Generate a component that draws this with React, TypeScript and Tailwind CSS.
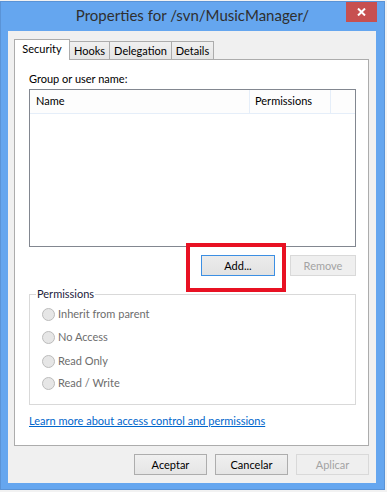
import React from "react";

const btn =
  "h-[21px] border border-[#adadad] bg-gradient-to-b from-[#f0f0f0] to-[#e5e5e5] text-[11px] leading-[19px] text-black flex items-center justify-center";
const btnDisabled =
  "h-[21px] border border-[#d9d9d9] bg-[#efefef] text-[11px] leading-[19px] text-[#a3a3a3] flex items-center justify-center";

const tabs = [
  { label: "Security", w: "w-[56px]", active: true },
  { label: "Hooks", w: "w-[41px]", active: false },
  { label: "Delegation", w: "w-[63px]", active: false },
  { label: "Details", w: "w-[43px]", active: false },
];

const perms = [
  { label: "Inherit from parent", mt: "mt-0" },
  { label: "No Access", mt: "mt-[7px]" },
  { label: "Read Only", mt: "mt-[8px]" },
  { label: "Read / Write", mt: "mt-[6px]" },
];

function Radio({ label, mt }: { label: string; mt: string }) {
  return (
    <div className={`flex items-center h-[16px] gap-[3px] ${mt}`}>
      <span className="w-[13px] h-[13px] rounded-full border border-[#bcbcbc] bg-[#e6e6e6]" />
      <span className="text-[11px] leading-[16px] text-[#6d6d6d]">{label}</span>
    </div>
  );
}

export default function App() {
  return (
    <div className="w-[387px] h-[492px] bg-[#f2f2f2] pt-[1px] overflow-hidden font-['Lato',sans-serif]">
      <div className="w-[385px] h-[489px] border border-[#5a93d6] bg-[#65a6ef] flex flex-col">
        {/* Title bar */}
        <div className="relative h-[29px] flex items-center justify-center">
          <span className="text-[15px] leading-[20px] text-[#2f2f2f] -mt-[3px]">
            Properties for /svn/MusicManager/
          </span>
          <button className="absolute right-[7px] top-0 w-[31px] h-[20px] bg-[#c75050] flex items-center justify-center">
            <svg width="9" height="8" viewBox="0 0 9 8">
              <path d="M1 0.5 L8 7.5 M8 0.5 L1 7.5" stroke="#fff" strokeWidth="2" />
            </svg>
          </button>
        </div>

        {/* Client area */}
        <div className="ml-[7px] mr-[8px] mb-[6px] flex-1 bg-[#f0f0f0] pt-[8px] pl-[6px] pr-[7px] flex flex-col">
          {/* Tabs */}
          <div className="flex items-end h-[20px]">
            {tabs.map((t, i) =>
              t.active ? (
                <div
                  key={t.label}
                  className={`${t.w} h-[21px] -mb-px relative z-10 border border-b-0 border-[#acacac] bg-white text-[11px] leading-[18px] text-black flex justify-center`}
                >
                  {t.label}
                </div>
              ) : (
                <div
                  key={t.label}
                  className={`${t.w} h-[18px] ${i > 0 ? "-ml-px" : ""} border border-b-0 border-[#acacac] bg-gradient-to-b from-[#f0f0f0] to-[#e5e5e5] text-[11px] leading-[17px] text-black flex justify-center`}
                >
                  {t.label}
                </div>
              )
            )}
          </div>

          {/* Tab panel */}
          <div className="w-[355px] h-[387px] border border-[#acacac] bg-white pt-[11px] pl-[14px] pr-[12px] flex flex-col">
            <div className="text-[11px] leading-[16px] text-black">Group or user name:</div>

            <div className="mt-[2px] h-[158px] border border-[#828790] bg-white">
              <div className="h-[24px] flex border-b border-[#e5eef9] bg-[#fdfdfd] text-[11px] text-black">
                <div className="w-[220px] pl-[6px] flex items-center border-r border-[#e5eef9]">Name</div>
                <div className="w-[81px] pl-[5px] flex items-center border-r border-[#e5eef9]">Permissions</div>
              </div>
            </div>

            <div className="relative mt-[8px] flex justify-end gap-[15px]">
              <button className="w-[74px] h-[21px] border border-[#3c8fe3] bg-gradient-to-b from-[#ececec] to-[#e2e2e2] text-[11px] leading-[19px] text-black flex items-center justify-center">
                Add...
              </button>
              <button className={`w-[66px] ${btnDisabled}`}>Remove</button>
              <div className="absolute left-[157px] -top-[12px] w-[100px] h-[49px] border-[4px] border-[#e81123]" />
            </div>

            <fieldset className="mt-[10px] border border-[#d9d9d9] pb-[13px]">
              <legend className="ml-[6px] px-[1px] text-[11px] leading-[16px] text-[#1c1c3c]">Permissions</legend>
              <div className="pt-[4px] pl-[12px] flex flex-col">
                {perms.map((p) => (
                  <Radio key={p.label} label={p.label} mt={p.mt} />
                ))}
              </div>
            </fieldset>

            <a href="#" className="mt-[8px] self-start text-[11px] leading-[16px] text-[#0066cc] underline">
              Learn more about access control and permissions
            </a>
          </div>

          {/* Dialog buttons */}
          <div className="mt-[8px] flex justify-end gap-[8px]">
            <button className={`w-[73px] ${btn}`}>Aceptar</button>
            <button className={`w-[73px] ${btn}`}>Cancelar</button>
            <button className={`w-[73px] ${btnDisabled}`}>Aplicar</button>
          </div>
        </div>
      </div>
    </div>
  );
}
